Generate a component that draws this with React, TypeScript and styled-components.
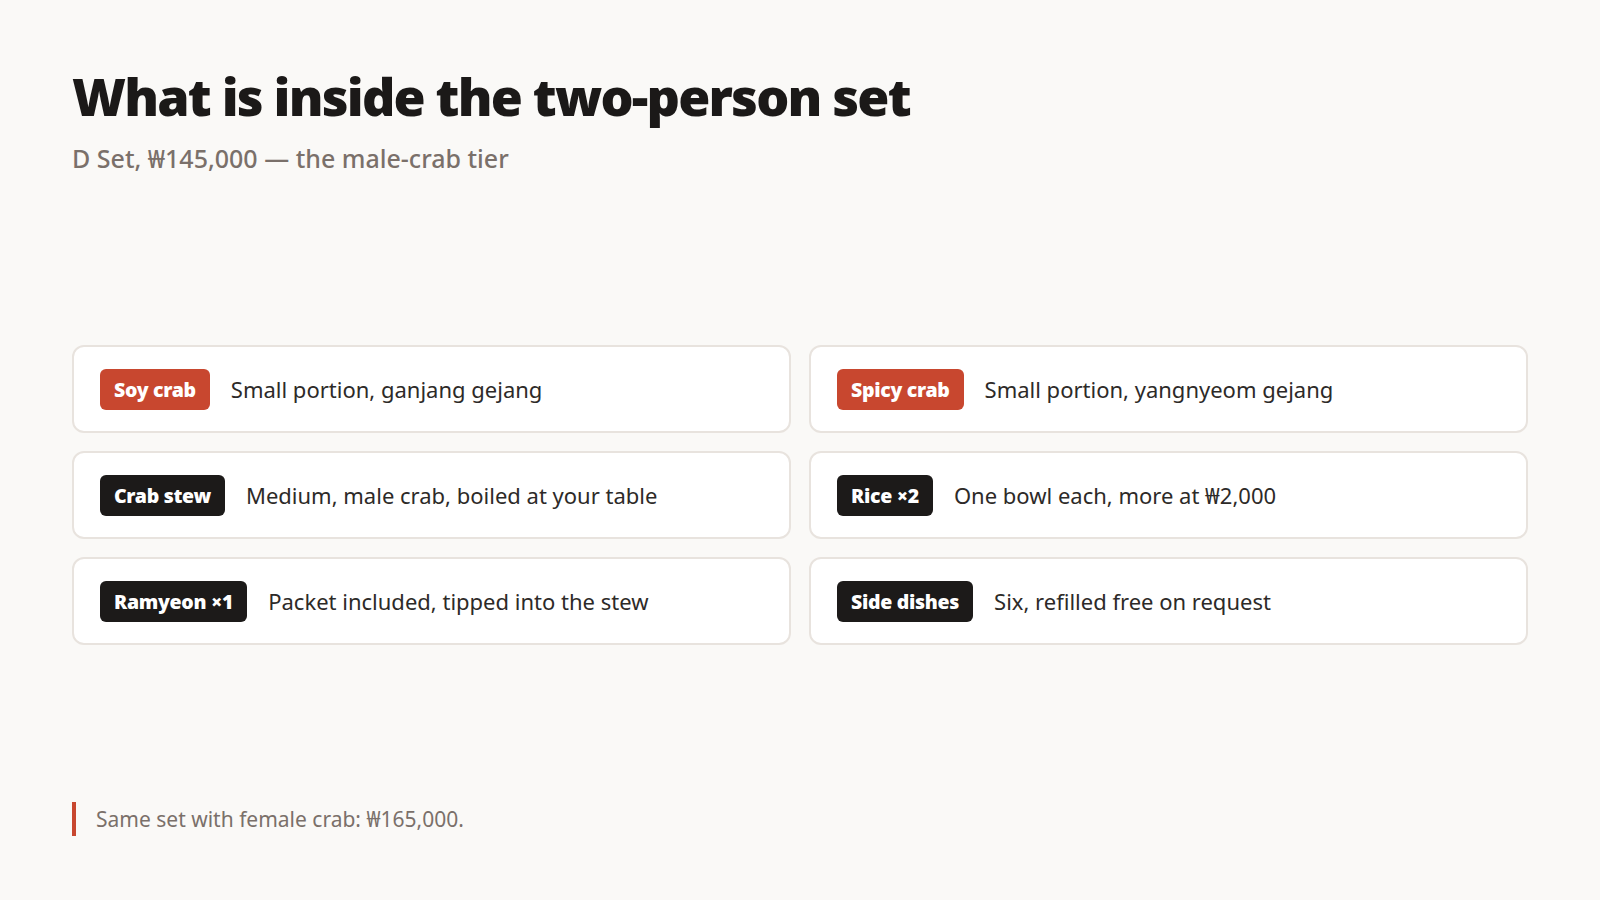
import React from "react";
import styled, { createGlobalStyle } from "styled-components";

const GlobalStyle = createGlobalStyle`
  html, body { margin: 0; padding: 0; background: #faf9f7; }
  body { font-family: "Noto Sans", "Open Sans", sans-serif; color: #2a2725; }
  * { box-sizing: border-box; }
`;

const Page = styled.div`
  min-height: 100vh;
  display: flex;
  flex-direction: column;
  padding: 66px 72px 64px;
`;

const Header = styled.header`
  display: flex;
  flex-direction: column;
  gap: 16px;
`;

const Title = styled.h1`
  margin: 0;
  font-family: "Noto Sans", "Lato", sans-serif;
  font-weight: 900;
  font-size: 52px;
  line-height: 1.15;
  letter-spacing: -1.8px;
  color: #1b1918;
`;

const Subtitle = styled.p`
  margin: 0;
  font-size: 25px;
  line-height: 1.3;
  font-weight: 500;
  color: #7a706a;
`;

const Main = styled.main`
  flex: 1;
  display: flex;
  align-items: center;
  padding-top: 14px;
`;

const Grid = styled.div`
  width: 100%;
  display: grid;
  grid-template-columns: 1fr 1fr;
  gap: 18px;
`;

const Card = styled.div`
  display: flex;
  align-items: center;
  gap: 21px;
  min-height: 88px;
  padding: 0 26px;
  background: #ffffff;
  border: 2px solid #e8e3de;
  border-radius: 12px;
`;

const Tag = styled.span<{ $tone: "red" | "dark" }>`
  display: inline-flex;
  align-items: center;
  height: 41px;
  padding: 0 14px;
  border-radius: 6px;
  background: ${(p) => (p.$tone === "red" ? "#c8472f" : "#1c1a19")};
  color: #ffffff;
  font-family: "Noto Sans", "Lato", sans-serif;
  font-weight: 900;
  font-size: 19.5px;
  letter-spacing: -0.3px;
  white-space: nowrap;
`;

const Desc = styled.span`
  font-size: 22px;
  color: #2d2a28;
`;

const Footer = styled.footer`
  display: flex;
  align-items: center;
  border-left: 4px solid #c8472f;
  padding-left: 20px;
  min-height: 34px;
  font-size: 21px;
  color: #7a706a;
`;

const items: { tag: string; tone: "red" | "dark"; desc: string }[] = [
  { tag: "Soy crab", tone: "red", desc: "Small portion, ganjang gejang" },
  { tag: "Spicy crab", tone: "red", desc: "Small portion, yangnyeom gejang" },
  { tag: "Crab stew", tone: "dark", desc: "Medium, male crab, boiled at your table" },
  { tag: "Rice ×2", tone: "dark", desc: "One bowl each, more at ₩2,000" },
  { tag: "Ramyeon ×1", tone: "dark", desc: "Packet included, tipped into the stew" },
  { tag: "Side dishes", tone: "dark", desc: "Six, refilled free on request" },
];

export default function App() {
  return (
    <>
      <GlobalStyle />
      <Page>
        <Header>
          <Title>What is inside the two-person set</Title>
          <Subtitle>D Set, ₩145,000 — the male-crab tier</Subtitle>
        </Header>
        <Main>
          <Grid>
            {items.map((it) => (
              <Card key={it.tag}>
                <Tag $tone={it.tone}>{it.tag}</Tag>
                <Desc>{it.desc}</Desc>
              </Card>
            ))}
          </Grid>
        </Main>
        <Footer>Same set with female crab: ₩165,000.</Footer>
      </Page>
    </>
  );
}
